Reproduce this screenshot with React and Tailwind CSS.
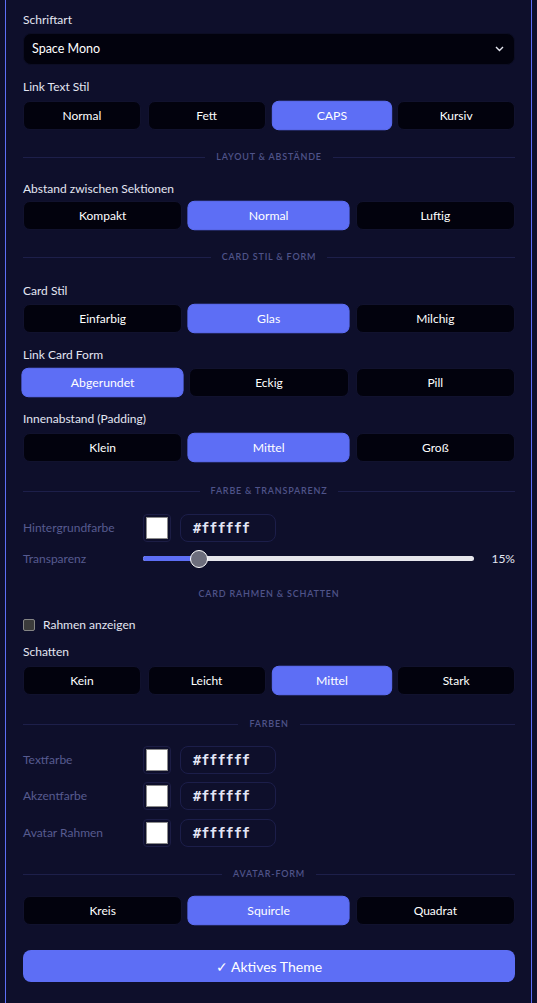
import React from "react";

const ACC = "bg-[#5d6ef5]";

function Label({ children, className = "" }) {
  return (
    <div className={"text-[12px] leading-[16px] text-[#e4e6f2] " + className}>
      {children}
    </div>
  );
}

function Seg({ options, active, cols, className = "" }) {
  const grid = cols === 4 ? "grid-cols-4" : "grid-cols-3";
  return (
    <div className={"grid gap-[7px] " + grid + " " + className}>
      {options.map((o) => (
        <div
          key={o}
          className={
            "flex h-[29px] items-center justify-center rounded-[7px] text-[12px] text-white " +
            (o === active
              ? ACC + " border border-[#5d6ef5] scale-[1.02]"
              : "bg-[#02020d] border border-[#11122e]")
          }
        >
          {o}
        </div>
      ))}
    </div>
  );
}

function Divider({ children, lines = true, className = "" }) {
  return (
    <div className={"flex h-[12px] items-center gap-[11px] " + className}>
      <div className={"h-px flex-1 " + (lines ? "bg-[#1d1f4a]" : "")} />
      <div className="text-[9px] font-semibold uppercase tracking-[0.8px] text-[#4f5389]">
        {children}
      </div>
      <div className={"h-px flex-1 " + (lines ? "bg-[#1d1f4a]" : "")} />
    </div>
  );
}

function ColorRow({ label, className = "" }) {
  return (
    <div className={"flex h-[28px] items-center " + className}>
      <div className="w-[120px] text-[12px] text-[#575b90]">{label}</div>
      <div className="flex h-[28px] w-[28px] items-center justify-center rounded-[4px] border border-[#1c1d45]">
        <div className="h-[22px] w-[22px] border border-[#8a8a8a] bg-white" />
      </div>
      <div className="ml-[9px] flex h-[28px] w-[96px] items-center rounded-[8px] border border-[#1c1e4a] pl-[12px] font-['DejaVu_Sans_Mono',monospace] text-[13.5px] font-bold text-[#e3e6f6]">
        #ffffff
      </div>
    </div>
  );
}

export default function App() {
  return (
    <div className="min-h-[1003px] bg-[#0e0f2b] font-['Lato',sans-serif]">
      <div className="mx-[5px] min-h-[1003px] border-x border-[#5d6ef5] pl-[17px] pr-[16px] pt-[12px] pb-[20px]">
        <Label>Schriftart</Label>
        <div className="mt-[5px] flex h-[32px] items-center justify-between rounded-[8px] border border-[#0c0d24] bg-[#02020d] pl-[8px] pr-[8px] text-[12.5px] text-white">
          <span>Space Mono</span>
          <svg width="9" height="6" viewBox="0 0 9 6" className="mr-[2px]">
            <path d="M1 1 L4.5 4.5 L8 1" fill="none" stroke="#e5e7f0" strokeWidth="1.4" />
          </svg>
        </div>

        <Label className="mt-[14px]">Link Text Stil</Label>
        <Seg className="mt-[6px]" cols={4} options={["Normal", "Fett", "CAPS", "Kursiv"]} active="CAPS" />

        <Divider className="mt-[21px]">Layout &amp; Abstände</Divider>

        <Label className="mt-[18px]">Abstand zwischen Sektionen</Label>
        <Seg className="mt-[4px]" cols={3} options={["Kompakt", "Normal", "Luftig"]} active="Normal" />

        <Divider className="mt-[21px]">Card Stil &amp; Form</Divider>

        <Label className="mt-[20px]">Card Stil</Label>
        <Seg className="mt-[5px]" cols={3} options={["Einfarbig", "Glas", "Milchig"]} active="Glas" />

        <Label className="mt-[14px]">Link Card Form</Label>
        <Seg className="mt-[5px]" cols={3} options={["Abgerundet", "Eckig", "Pill"]} active="Abgerundet" />

        <Label className="mt-[14px]">Innenabstand (Padding)</Label>
        <Seg className="mt-[6px]" cols={3} options={["Klein", "Mittel", "Groß"]} active="Mittel" />

        <Divider className="mt-[23px]">Farbe &amp; Transparenz</Divider>

        <ColorRow className="mt-[17px]" label="Hintergrundfarbe" />

        <div className="mt-[8px] flex h-[18px] items-center">
          <div className="w-[120px] text-[12px] text-[#575b90]">Transparenz</div>
          <div className="relative h-[18px] flex-1">
            <div className="absolute left-0 right-0 top-[6px] h-[5px] rounded-full bg-[#e6e6ec]" />
            <div className="absolute left-0 top-[6px] h-[5px] w-[56px] rounded-l-full bg-[#5d6ef5]" />
            <div className="absolute left-[47px] top-0 h-[18px] w-[18px] rounded-full border-[1.5px] border-white bg-[#6c6d7c]" />
          </div>
          <div className="w-[41px] text-right text-[12px] text-[#e4e6f2]">15%</div>
        </div>

        <Divider className="mt-[20px]" lines={false}>Card Rahmen &amp; Schatten</Divider>

        <div className="mt-[17px] flex h-[16px] items-center gap-[8px]">
          <div className="h-[12px] w-[12px] rounded-[2px] border border-[#858585] bg-[#3b3b3b]" />
          <span className="text-[12px] text-[#e4e6f2]">Rahmen anzeigen</span>
        </div>

        <Label className="mt-[11px]">Schatten</Label>
        <Seg className="mt-[6px]" cols={4} options={["Kein", "Leicht", "Mittel", "Stark"]} active="Mittel" />

        <Divider className="mt-[23px]">Farben</Divider>

        <ColorRow className="mt-[16px]" label="Textfarbe" />
        <ColorRow className="mt-[8px]" label="Akzentfarbe" />
        <ColorRow className="mt-[9px]" label="Avatar Rahmen" />

        <Divider className="mt-[21px]">Avatar-Form</Divider>

        <Seg className="mt-[16px]" cols={3} options={["Kreis", "Squircle", "Quadrat"]} active="Squircle" />

        <div className="mt-[25px] flex h-[32px] items-center justify-center rounded-[8px] bg-[#5d6ef5] text-[14px] text-white">
          ✓ Aktives Theme
        </div>
      </div>
    </div>
  );
}
